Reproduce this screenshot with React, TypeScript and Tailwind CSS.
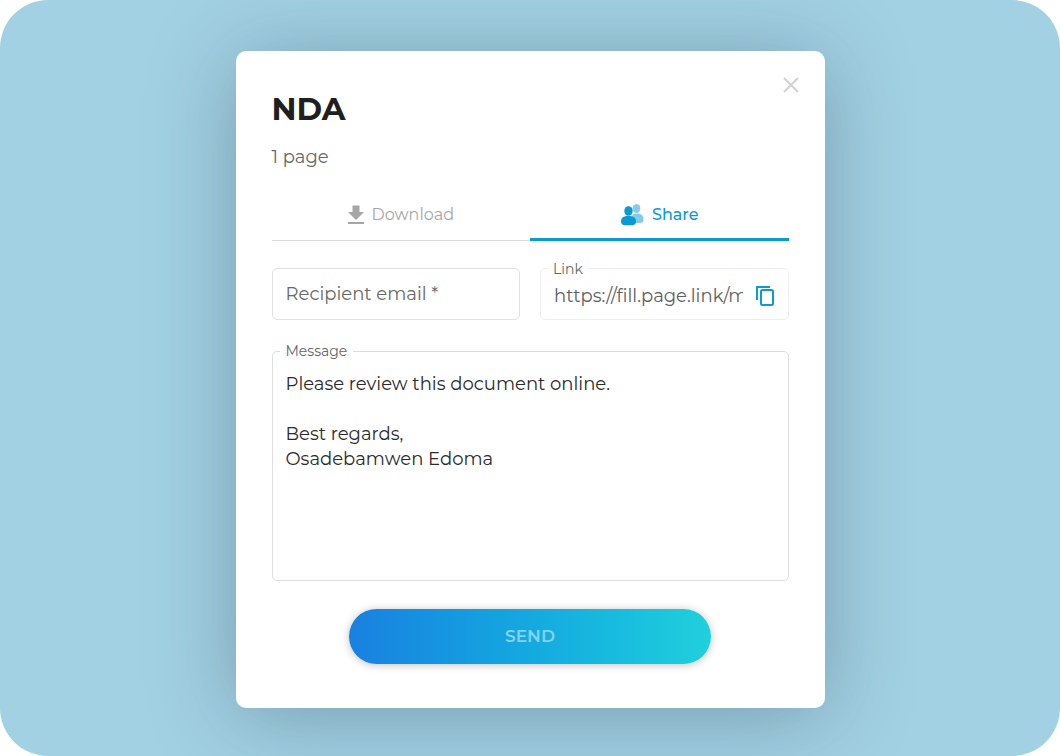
import React from 'react';

const DownloadIcon = () => (
  <svg className="size-6" viewBox="0 0 24 24" fill="currentColor" aria-hidden="true">
    <path d="M8.500 2.500h7v6.500h4.500L12 17 4 9h4.500zM4 19h16v2H4z" />
  </svg>
);

const PeopleIcon = () => (
  <svg className="size-6" viewBox="0 0 24 24" aria-hidden="true">
    <g fill="#84cbea">
      <ellipse cx="16.500" cy="5.500" rx="3.800" ry="4.500" />
      <path d="M12 20v-6c0-2.500 2-3.500 5-3.500s6.500 1.500 6.500 5.500c0 2.500-1 4-4 4z" />
    </g>
    <g fill="#0d9ad2">
      <ellipse cx="8.500" cy="8" rx="4.200" ry="4.800" />
      <path d="M1 18.500c0-4 2.500-5.500 7.500-5.500s7.500 1.500 7.500 5.500c0 2.500-1.500 3.800-4 3.800H5c-2.500 0-4-1.300-4-3.800z" />
    </g>
  </svg>
);

const CopyIcon = () => (
  <svg className="size-5" viewBox="0 0 20 20" fill="none" stroke="currentColor" strokeWidth="2" aria-hidden="true">
    <path d="M2 14V1h13" />
    <rect x="6" y="4" width="12" height="15" rx="1.500" />
  </svg>
);

const CloseIcon = () => (
  <svg className="size-5" viewBox="0 0 20 20" fill="none" stroke="currentColor" strokeWidth="2" aria-hidden="true">
    <path d="M3 3l14 14M17 3L3 17" />
  </svg>
);

const ShareDialog = () => {
  return (
    <div
      role="dialog"
      aria-labelledby="dialog-title"
      className="relative w-full max-w-[589px] rounded-[10px] bg-white px-9 pt-9 pb-11 shadow-[0_8px_84px_rgba(45,65,85,0.36)]"
    >
      <button type="button" aria-label="Close" className="absolute top-6 right-6 text-[#d2d2d2]">
        <CloseIcon />
      </button>

      <h1 id="dialog-title" className="text-[31px] leading-11 font-bold text-[#1f1f1f]">NDA</h1>
      <p className="mt-3.5 text-lg leading-6 text-[#666666]">1 page</p>

      <div role="tablist" className="mt-5 grid grid-cols-2">
        <button
          type="button"
          role="tab"
          aria-selected="false"
          className="flex h-13 items-center justify-center gap-1 border-b border-[#dedede] pr-1 text-base text-[#a6a6a6]"
        >
          <DownloadIcon />
          Download
        </button>
        <button
          type="button"
          role="tab"
          aria-selected="true"
          className="flex h-13 items-center justify-center gap-2 border-b border-[#0d9ad2] text-base font-medium text-[#0d9ad2] shadow-[inset_0_-2px_0_#0d9ad2]"
        >
          <PeopleIcon />
          Share
        </button>
      </div>

      <form>
        <div className="mt-[27px] grid grid-cols-2 gap-5">
          <input
            type="email"
            required
            aria-label="Recipient email"
            placeholder="Recipient email *"
            className="h-13 w-full min-w-0 rounded-[5px] border border-[#e0e0e0] px-[13px] text-lg placeholder:text-[#686868]"
          />
          <div className="relative flex h-13 items-center gap-3 rounded-[5px] border border-[#eeeeee] px-[13px]">
            <label htmlFor="link" className="absolute -top-2 left-2 bg-white px-1 text-sm leading-4 text-[#666666]">
              Link
            </label>
            <input
              id="link"
              type="text"
              readOnly
              defaultValue="https://fill.page.link/mR4d"
              className="w-full min-w-0 pt-1 text-lg text-[#606060]"
            />
            <button type="button" aria-label="Copy link" className="shrink-0 pt-1 text-[#0d9ad2]">
              <CopyIcon />
            </button>
          </div>
        </div>

        <div className="relative mt-[31px]">
          <label htmlFor="message" className="absolute -top-2 left-2 bg-white px-1.5 text-sm leading-4 text-[#666666]">
            Message
          </label>
          <textarea
            id="message"
            className="block h-[230px] w-full resize-none rounded-[5px] border border-[#dedede] px-[13px] py-5 text-lg leading-[25px] text-[#2b2b2b]"
            defaultValue={'Please review this document online.\n\nBest regards,\nOsadebamwen Edoma'}
          />
        </div>

        <button
          type="button"
          className="mx-auto mt-7 block h-[55px] w-[70%] rounded-full bg-linear-to-r from-[#1a80e0] to-[#20d0dc] text-[17px] font-semibold text-[#84d2f0] shadow-[0_1px_8px_rgba(0,0,0,0.25)]"
        >
          SEND
        </button>
      </form>
    </div>
  );
};

export default function App() {
  return (
    <main className="flex min-h-screen items-start justify-center rounded-[48px] bg-[#a2d1e3] pt-[51px] pb-12 font-['Montserrat','Inter',sans-serif]">
      <ShareDialog />
    </main>
  );
}
